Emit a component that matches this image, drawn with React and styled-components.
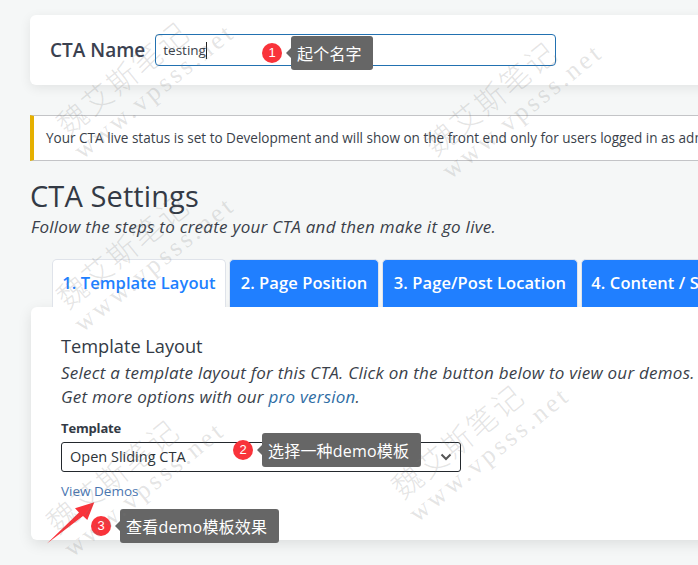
import styled, { createGlobalStyle } from "styled-components";

const sans = `"Open Sans", "Noto Sans", "Noto Sans CJK SC", sans-serif`;

const Global = createGlobalStyle`
  html, body {
    margin: 0;
    width: 698px;
    height: 565px;
    overflow: hidden;
    background: #f5f7f7;
  }
`;

const Page = styled.div`
  position: relative;
  width: 1100px;
  height: 565px;
  padding: 15px 0 0 30px;
  box-sizing: border-box;
  font-family: ${sans};
  color: #3a3f4a;
`;

const NameCard = styled.div`
  display: flex;
  align-items: center;
  gap: 10px;
  height: 70px;
  padding: 0 20px;
  background: #fff;
  border-radius: 6px;
  box-shadow: 0 3px 12px rgba(0, 0, 0, 0.08);
`;

const NameLabel = styled.label`
  font-size: 19px;
  font-weight: 600;
  color: #3a4150;
`;

const NameField = styled.div`
  box-sizing: border-box;
  width: 401px;
  height: 32px;
  padding: 0 7px;
  display: flex;
  align-items: center;
  border: 1px solid #2271b1;
  border-radius: 4px;
  font-size: 13.5px;
`;

const Caret = styled.span`
  width: 1px;
  height: 17px;
  background: #222;
`;

const Notice = styled.div`
  display: flex;
  align-items: center;
  box-sizing: border-box;
  height: 46px;
  margin-top: 30px;
  padding-left: 12px;
  background: #fff;
  border: 1px solid #c3c4c7;
  border-left: 4px solid #e5b000;
  font-size: 13.55px;
  white-space: nowrap;
`;

const Title = styled.h1`
  margin: 17px 0 0;
  font-size: 29px;
  line-height: 36px;
  font-weight: 400;
  letter-spacing: 0.1px;
  color: #333a45;
`;

const Lead = styled.p`
  margin: 2px 0 0 1px;
  font-size: 17px;
  line-height: 22px;
  font-style: italic;
  letter-spacing: 0.27px;
  color: #3a3f4a;
`;

const Tabs = styled.div`
  display: flex;
  gap: 3px;
  margin: 21px 0 0 22px;
`;

const Tab = styled.div`
  display: flex;
  align-items: center;
  justify-content: center;
  box-sizing: border-box;
  width: ${(p) => p.$w}px;
  height: 48px;
  padding-bottom: 2px;
  border: 1px solid #dfe3ea;
  border-bottom: 0;
  border-radius: 5px 5px 0 0;
  background: ${(p) => (p.$active ? "#fff" : "#207fff")};
  color: ${(p) => (p.$active ? "#207fff" : "#fff")};
  font-size: 16.5px;
  font-weight: 600;
  letter-spacing: 0.08px;
  white-space: nowrap;
`;

const Panel = styled.div`
  box-sizing: border-box;
  height: 233px;
  margin-left: 1px;
  padding: 27px 30px 0;
  background: #fff;
  border-radius: 6px 0 0 6px;
  box-shadow: 0 4px 14px rgba(0, 0, 0, 0.1);
`;

const PanelTitle = styled.h2`
  margin: 0;
  font-size: 18.2px;
  line-height: 24px;
  font-weight: 400;
  color: #333a45;
`;

const PanelText = styled.p`
  margin: 3px 0 0;
  font-size: 17px;
  line-height: 24px;
  font-style: italic;
  letter-spacing: 0.24px;
  white-space: nowrap;
`;

const ProLink = styled.a`
  color: #2e6da4;
`;

const FieldLabel = styled.div`
  margin-top: 10px;
  font-size: 13px;
  line-height: 18px;
  font-weight: 700;
  letter-spacing: -0.15px;
  color: #333a45;
`;

const SelectBox = styled.div`
  display: flex;
  align-items: center;
  justify-content: space-between;
  box-sizing: border-box;
  width: 400px;
  height: 30px;
  margin-top: 5px;
  padding: 0 8px 1px;
  border: 1px solid #23282d;
  border-radius: 3px;
  font-size: 14.5px;
  color: #2c3338;
`;

const DemoLink = styled.a`
  display: block;
  margin-top: 10px;
  font-size: 13.5px;
  line-height: 18px;
  color: #4a76b0;
`;

/* screenshot annotations drawn on top of the page */
const Callout = styled.div`
  position: absolute;
  left: ${(p) => p.$x}px;
  top: ${(p) => p.$y}px;
  display: flex;
  align-items: center;
  gap: 9px;
`;

const Badge = styled.div`
  width: 20px;
  height: 20px;
  border-radius: 50%;
  background: #f9333a;
  color: #fff;
  font-family: "Liberation Sans", sans-serif;
  font-size: 13px;
  line-height: 20px;
  text-align: center;
`;

const Note = styled.div`
  position: relative;
  display: flex;
  align-items: center;
  height: 34px;
  padding: 0 ${(p) => p.$pad}px 0 6px;
  background: #666;
  border-radius: 3px;
  color: #fff;
  font-family: "Open Sans", "Noto Sans CJK SC", sans-serif;
  font-size: 16px;
  letter-spacing: 0.2px;
  white-space: nowrap;
  &::before {
    content: "";
    position: absolute;
    left: -5px;
    top: 12px;
    border: 5px solid transparent;
    border-left: 0;
    border-right-color: #666;
  }
`;

const ArrowSvg = styled.svg`
  position: absolute;
  left: 40px;
  top: 495px;
`;

const Mark = styled.div`
  position: absolute;
  left: ${(p) => p.$x}px;
  top: ${(p) => p.$y}px;
  transform: rotate(-39deg);
  transform-origin: 0 0;
  color: rgba(120, 120, 120, 0.2);
  pointer-events: none;
  white-space: nowrap;
`;

const MarkCn = styled.div`
  margin-left: 5px;
  font-family: "Noto Sans CJK SC", sans-serif;
  font-size: 30px;
  line-height: 34px;
  letter-spacing: 2px;
  font-weight: 300;
`;

const MarkUrl = styled.div`
  font-family: "Liberation Serif", serif;
  font-size: 26px;
  line-height: 30px;
  letter-spacing: 3.3px;
  margin: 0 0 0 2px;
`;

const marks = [
  [45, 117],
  [413, 137],
  [45, 290],
  [380, 480],
  [35, 515],
];

export default function App() {
  return (
    <>
      <Global />
      <Page>
        <NameCard>
          <NameLabel>CTA Name</NameLabel>
          <NameField>
            testing
            <Caret />
          </NameField>
        </NameCard>
        <Notice>
          Your CTA live status is set to Development and will show on the front end only for users logged in as admin.
        </Notice>
        <Title>CTA Settings</Title>
        <Lead>Follow the steps to create your CTA and then make it go live.</Lead>
        <Tabs>
          <Tab $active $w={174}>1. Template Layout</Tab>
          <Tab $w={150}>2. Page Position</Tab>
          <Tab $w={196}>3. Page/Post Location</Tab>
          <Tab $w={158}>4. Content / Style</Tab>
        </Tabs>
        <Panel>
          <PanelTitle>Template Layout</PanelTitle>
          <PanelText>
            Select a template layout for this CTA. Click on the button below to view our demos.
            <br />
            Get more options with our <ProLink>pro version</ProLink>.
          </PanelText>
          <FieldLabel>Template</FieldLabel>
          <SelectBox>
            Open Sliding CTA
            <svg width="12" height="8" viewBox="0 0 12 8">
              <path d="M1.5 1.5 6 6l4.500-4.500" fill="none" stroke="#555" strokeWidth="2" />
            </svg>
          </SelectBox>
          <DemoLink>View Demos</DemoLink>
        </Panel>

        <Callout $x={262} $y={36}>
          <Badge>1</Badge>
          <Note $pad={11}>起个名字</Note>
        </Callout>
        <Callout $x={233} $y={433}>
          <Badge>2</Badge>
          <Note $pad={12}>选择一种demo模板</Note>
        </Callout>
        <Callout $x={91} $y={509}>
          <Badge>3</Badge>
          <Note $pad={12}>查看demo模板效果</Note>
        </Callout>
        <ArrowSvg width="60" height="52" viewBox="0 0 60 52">
          <path d="M7 48.500 39 17.500 35 13.300 54.300 7.300 47.300 25 43 21Z" fill="#f9333a" />
        </ArrowSvg>

        {marks.map(([x, y]) => (
          <Mark key={x + "-" + y} $x={x} $y={y}>
            <MarkCn>魏艾斯笔记</MarkCn>
            <MarkUrl>www.vpsss.net</MarkUrl>
          </Mark>
        ))}
      </Page>
    </>
  );
}
